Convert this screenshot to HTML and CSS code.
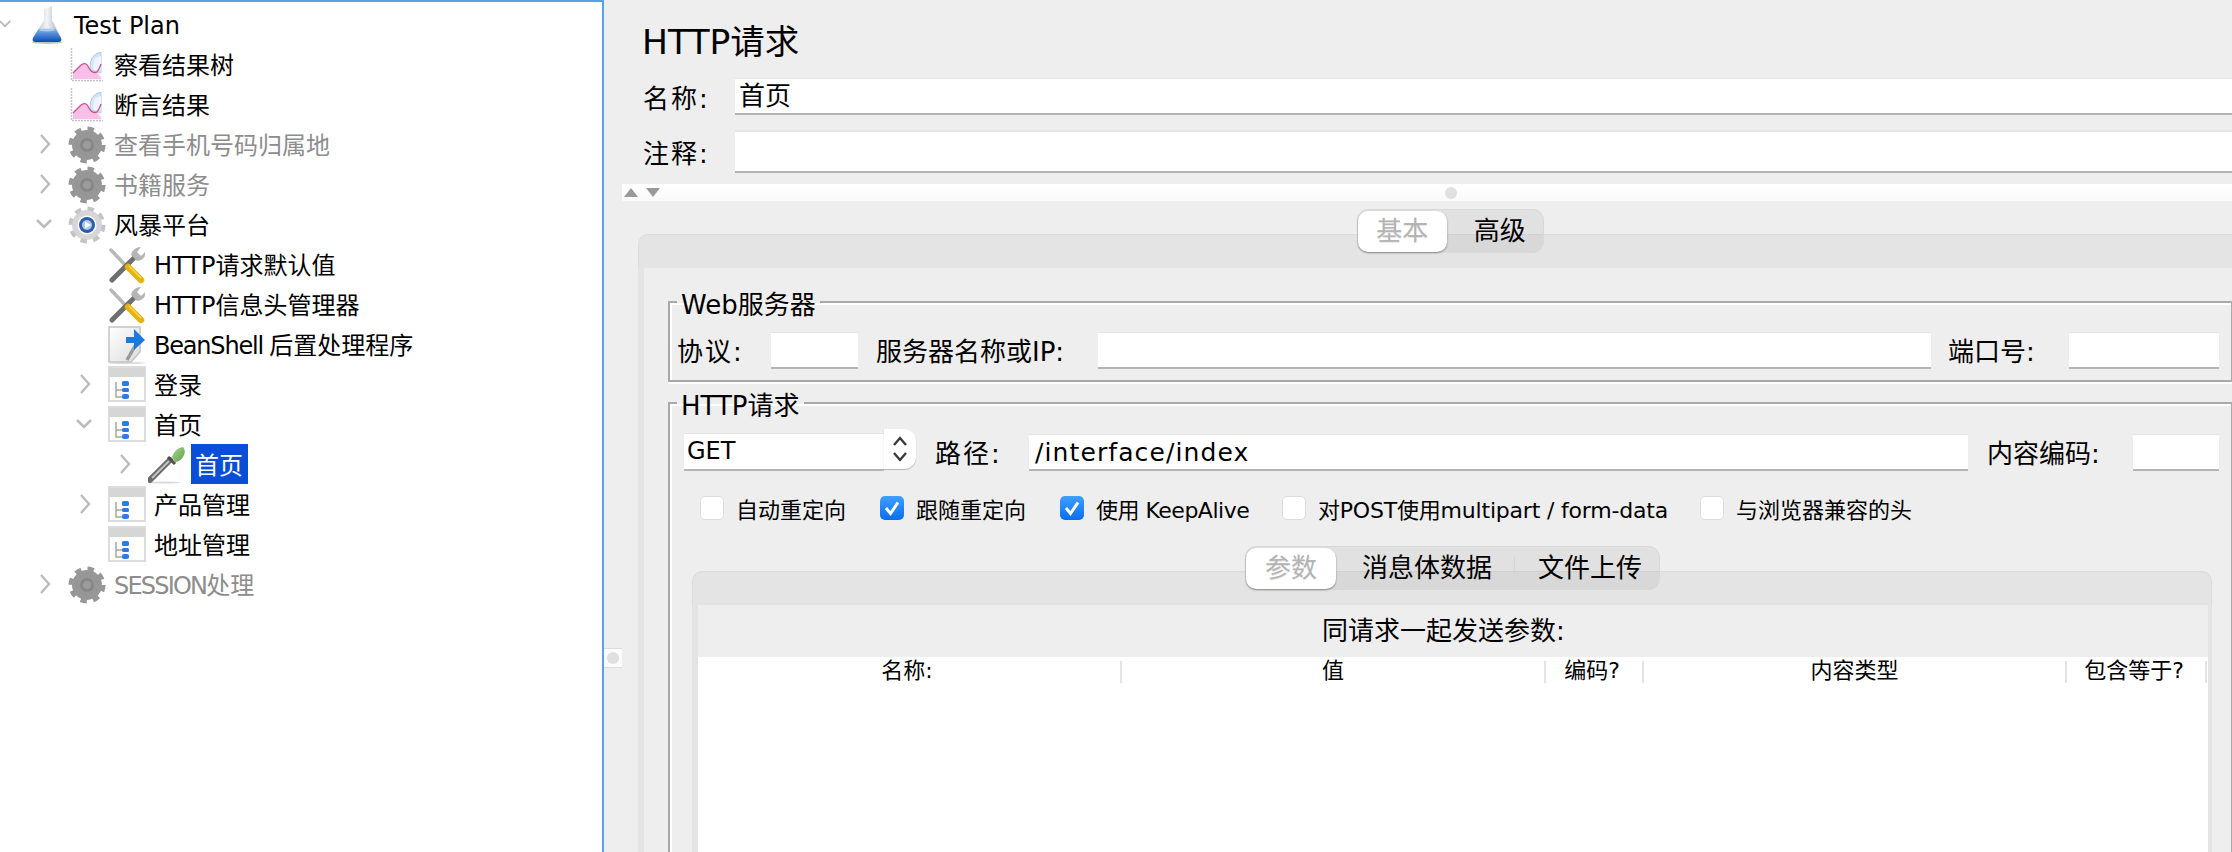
FILE: index.html
```html
<!DOCTYPE html>
<html lang="zh">
<head>
<meta charset="utf-8">
<title>HTTP请求</title>
<link rel="stylesheet" href="styles.css">
</head>
<body>
<svg class="defs" width="0" height="0" aria-hidden="true">
  <defs>
    <linearGradient id="glass" x1="0" y1="0" x2="1" y2="0"><stop offset="0" stop-color="#a9aeb8"/><stop offset=".5" stop-color="#f4f5f8"/><stop offset="1" stop-color="#9aa0ac"/></linearGradient>
    <linearGradient id="liquid" x1="0" y1="0" x2="0" y2="1"><stop offset="0" stop-color="#7fb2ee"/><stop offset="1" stop-color="#0a4bb4"/></linearGradient>
    <linearGradient id="page" x1="0" y1="0" x2="1" y2="1"><stop offset="0" stop-color="#fff"/><stop offset="1" stop-color="#dcdcdc"/></linearGradient>
    <linearGradient id="bulb" x1="0" y1="0" x2="1" y2="1"><stop offset="0" stop-color="#a6d88e"/><stop offset="1" stop-color="#5f9f4c"/></linearGradient>
    <symbol id="i-flask" viewBox="0 0 38 38">
      <ellipse cx="19" cy="36.500" rx="15" ry="1.500" fill="#c4c4c4"/>
      <path d="M16 3 24 0V14L33 32Q34.500 36 30 36H8Q3.500 36 5 32L16 14Z" fill="url(#glass)"/>
      <path d="M10.500 23H27.500L33 32Q34.500 36 30 36H8Q3.500 36 5 32Z" fill="url(#liquid)"/>
      <ellipse cx="19" cy="24" rx="8" ry="1.500" fill="#a9c9f2"/>
    </symbol>
    <symbol id="i-chart" viewBox="0 0 38 38">
      <path d="M3.500 2V34.500H35" fill="none" stroke="#c4c4c4" stroke-width="1.500" stroke-dasharray="2 1"/>
      <path d="M22 24Q21 8 33 6V27Z" fill="#d6e4fa" stroke="#b4caee"/>
      <path d="M27 12Q24 17 26 24H33V10Z" fill="#eef4fd"/>
      <path d="M5 33V27L13 19Q18 15 21 22 24 28 29 26L34 33Z" fill="#f8bfe8"/>
      <path d="M5 27 13 19Q18 15 21 22 24 28 29 26 32 22 33 18" fill="none" stroke="#c2557f" stroke-width="1.300"/>
    </symbol>
    <symbol id="i-gear-off" viewBox="0 0 38 38">
      <circle cx="19" cy="19" r="15" fill="#979797"/>
      <circle cx="19" cy="19" r="16.500" fill="none" stroke="#979797" stroke-width="4" stroke-dasharray="6.500 6.460"/>
      <circle cx="19" cy="19" r="7" fill="#878787"/>
      <circle cx="19" cy="19" r="4" fill="#9c9c9c"/>
    </symbol>
    <symbol id="i-gear-on" viewBox="0 0 38 38">
      <circle cx="19" cy="19" r="15" fill="#d6d6d8"/>
      <circle cx="19" cy="19" r="16.500" fill="none" stroke="#c4c4c6" stroke-width="4" stroke-dasharray="6.500 6.460"/>
      <circle cx="19" cy="19" r="9.500" fill="#fff"/>
      <circle cx="19" cy="19" r="8" fill="#2c5ea8"/>
      <circle cx="19" cy="19" r="5" fill="#a9c8ee"/>
      <path d="M17 15.500 23 19 17 22.500Z" fill="#fff"/>
    </symbol>
    <symbol id="i-tools" viewBox="0 0 38 38">
      <path d="M3 4 19 21" stroke="#b9b9b9" stroke-width="3.500" stroke-linecap="round"/>
      <path d="M4 34 27 11" stroke="#6f6f6f" stroke-width="5" stroke-linecap="round"/>
      <path d="M23 9Q25 1 33 1L29 6 33 10 37 6Q38 14 29 15Z" fill="#b5b5b5"/>
      <path d="M20 21 33 34" stroke="#e8b30f" stroke-width="6.500" stroke-linecap="round"/>
      <path d="M21 20 33 32" stroke="#f7d65a" stroke-width="1.500"/>
    </symbol>
    <symbol id="i-script" viewBox="0 0 38 38">
      <ellipse cx="19" cy="37" rx="18" ry="1" fill="#dcdcdc"/>
      <path d="M1 1H32V26L23 36H1Z" fill="url(#page)" stroke="#c4c4c4" stroke-width="1.500"/>
      <path d="M27 20 19 34" stroke="#9a9a9a" stroke-width="3.500"/>
      <path d="M18 11H26V3L37 14 26 24V17H18Z" fill="#1b78dc"/>
    </symbol>
    <symbol id="i-group" viewBox="0 0 38 38">
      <rect x="1" y="1" width="36" height="34" fill="#fff" stroke="#dcdcdc" stroke-width="2"/>
      <rect x="1" y="2" width="36" height="9" fill="#d6d6d6"/>
      <path d="M8 16V31H14M8 24H14" fill="none" stroke="#a6a6a6" stroke-width="1.500"/>
      <rect x="14" y="15" width="7" height="5" rx="1.500" fill="#2c7de2"/>
      <rect x="14" y="22" width="7" height="4" rx="1.500" fill="#2c7de2"/>
      <rect x="14" y="28" width="7" height="5" rx="2" fill="#2c7de2"/>
    </symbol>
    <symbol id="i-dropper" viewBox="0 0 38 38">
      <ellipse cx="16" cy="36.500" rx="16" ry="1" fill="#dadada"/>
      <path d="M2 34 22 14" stroke="#6c6c6c" stroke-width="6" stroke-linecap="round"/>
      <path d="M4 32 21 15" stroke="#c6c6c6" stroke-width="1.800"/>
      <path d="M20 11 27 18" stroke="#4f4f4f" stroke-width="3"/>
      <path d="M24 11Q27 2 35 1 38 4 36 9 33 16 27 16Z" fill="url(#bulb)"/>
    </symbol>
    <symbol id="c-right" viewBox="0 0 16 22"><path d="M4 2 12 11 4 20" fill="none" stroke="#bcbcbc" stroke-width="2.500"/></symbol>
    <symbol id="c-down" viewBox="0 0 16 16"><path d="M1 4 8 11 15 4" fill="none" stroke="#bcbcbc" stroke-width="2.500"/></symbol>
  </defs>
</svg>

<div class="app">
  <nav class="tree">
    <div class="node l0"><span class="tog"><svg class="chev-down small"><use href="#c-down"/></svg></span><svg class="ico"><use href="#i-flask"/></svg><span class="lbl">Test Plan</span></div>
    <div class="node l1"><span class="tog"></span><svg class="ico"><use href="#i-chart"/></svg><span class="lbl">察看结果树</span></div>
    <div class="node l1"><span class="tog"></span><svg class="ico"><use href="#i-chart"/></svg><span class="lbl">断言结果</span></div>
    <div class="node l1 off"><span class="tog"><svg class="chev-right"><use href="#c-right"/></svg></span><svg class="ico"><use href="#i-gear-off"/></svg><span class="lbl">查看手机号码归属地</span></div>
    <div class="node l1 off"><span class="tog"><svg class="chev-right"><use href="#c-right"/></svg></span><svg class="ico"><use href="#i-gear-off"/></svg><span class="lbl">书籍服务</span></div>
    <div class="node l1"><span class="tog"><svg class="chev-down"><use href="#c-down"/></svg></span><svg class="ico"><use href="#i-gear-on"/></svg><span class="lbl">风暴平台</span></div>
    <div class="node l2"><span class="tog"></span><svg class="ico"><use href="#i-tools"/></svg><span class="lbl">HTTP请求默认值</span></div>
    <div class="node l2"><span class="tog"></span><svg class="ico"><use href="#i-tools"/></svg><span class="lbl">HTTP信息头管理器</span></div>
    <div class="node l2"><span class="tog"></span><svg class="ico"><use href="#i-script"/></svg><span class="lbl"><span class="tight">BeanShell </span>后置处理程序</span></div>
    <div class="node l2"><span class="tog"><svg class="chev-right"><use href="#c-right"/></svg></span><svg class="ico"><use href="#i-group"/></svg><span class="lbl">登录</span></div>
    <div class="node l2"><span class="tog"><svg class="chev-down"><use href="#c-down"/></svg></span><svg class="ico"><use href="#i-group"/></svg><span class="lbl">首页</span></div>
    <div class="node l3"><span class="tog"><svg class="chev-right"><use href="#c-right"/></svg></span><svg class="ico"><use href="#i-dropper"/></svg><span class="lbl selected">首页</span></div>
    <div class="node l2"><span class="tog"><svg class="chev-right"><use href="#c-right"/></svg></span><svg class="ico"><use href="#i-group"/></svg><span class="lbl">产品管理</span></div>
    <div class="node l2"><span class="tog"></span><svg class="ico"><use href="#i-group"/></svg><span class="lbl">地址管理</span></div>
    <div class="node l1 off"><span class="tog"><svg class="chev-right"><use href="#c-right"/></svg></span><svg class="ico"><use href="#i-gear-off"/></svg><span class="lbl"><span class="tighter">SESSION</span>处理</span></div>
  </nav>

  <main class="editor">
    <div class="v-handle"><span class="dot"></span></div>

    <h1 class="title">HTTP请求</h1>
    <div class="meta-row name-row"><label class="meta-label">名称:</label><div class="field grow">首页</div></div>
    <div class="meta-row note-row"><label class="meta-label">注释:</label><div class="field grow tall"></div></div>
    <div class="splitter"><span class="tri up"></span><span class="tri down"></span><span class="dot"></span></div>

    <div class="seg seg-main">
      <span class="seg-item on s-basic">基本</span>
      <span class="seg-item s-adv">高级</span>
    </div>
    <section class="pane pane-main">
      <div class="band"></div>
      <div class="pane-body">
        <fieldset class="group">
          <legend>Web服务器</legend>
          <div class="row server-row">
            <span class="lab l-proto">协议:</span><div class="field f-proto"></div>
            <span class="lab l-host">服务器名称或IP:</span><div class="field grow"></div>
            <span class="lab l-port">端口号:</span><div class="field f-port"></div>
          </div>
        </fieldset>
        <fieldset class="group group-http">
          <legend>HTTP请求</legend>
          <div class="row path-row">
            <div class="combo"><div class="field combo-val">GET</div><div class="combo-btn"><svg width="16" height="28" viewBox="0 0 16 28"><path d="M2 10 8 3 14 10M2 18 8 25 14 18" fill="none" stroke="#3a3a3a" stroke-width="2.400"/></svg></div></div>
            <span class="lab l-path">路径:</span><div class="field grow path-val">/interface/index</div>
            <span class="lab l-enc">内容编码:</span><div class="field f-enc"></div>
          </div>
          <div class="checks">
            <span class="check c1"><i class="box"></i>自动重定向</span>
            <span class="check c2"><i class="box on"><svg width="24" height="24" viewBox="0 0 24 24"><path d="M6 12 10.500 17.500 18 6.500" fill="none" stroke="#fff" stroke-width="3"/></svg></i>跟随重定向</span>
            <span class="check c3"><i class="box on"><svg width="24" height="24" viewBox="0 0 24 24"><path d="M6 12 10.500 17.500 18 6.500" fill="none" stroke="#fff" stroke-width="3"/></svg></i>使用 KeepAlive</span>
            <span class="check c4"><i class="box"></i>对POST使用multipart / form-data</span>
            <span class="check c5"><i class="box"></i>与浏览器兼容的头</span>
          </div>
          <div class="seg seg-sub">
            <span class="seg-item on s-param">参数</span>
            <span class="seg-item s-body">消息体数据</span>
            <span class="seg-sep"></span>
            <span class="seg-item s-file">文件上传</span>
          </div>
          <section class="pane pane-sub">
            <div class="band band-sub"></div>
            <div class="sub-body">
              <div class="params-title">同请求一起发送参数:</div>
              <div class="table">
                <div class="thead">
                  <span class="th">名称:</span>
                  <span class="th th-center">值</span>
                  <span class="th">编码?</span>
                  <span class="th th-center">内容类型</span>
                  <span class="th">包含等于?</span>
                </div>
              </div>
            </div>
          </section>
        </fieldset>
      </div>
    </section>
  </main>
</div>
</body>
</html>
```

FILE: styles.css
```css
* { box-sizing: border-box; }
html, body { margin: 0; height: 100%; }
body {
  width: 2232px;
  height: 852px;
  overflow: hidden;
  background: #eee;
  color: #000;
  font-family: "DejaVu Sans", "Noto Sans CJK SC", sans-serif;
  font-size: 26px;
}
.defs { position: absolute; }
.app { display: flex; height: 852px; }

/* tree */
.tree {
  flex: 0 0 604px;
  background: #fff;
  border-top: 2px solid #5aa2e4;
  border-right: 2px solid #5aa2e4;
  padding-top: 2px;
  font-size: 24px;
}
.node { display: flex; align-items: center; height: 40px; white-space: nowrap; }
.l1 { padding-left: 40px; }
.l2 { padding-left: 80px; }
.l3 { padding-left: 120px; }
.tog { flex: 0 0 28px; display: flex; align-items: center; }
.chev-right { width: 16px; height: 22px; margin-left: -3px; }
.chev-down { width: 16px; height: 16px; margin-left: -4px; }
.chev-down.small { width: 12px; height: 12px; margin-left: -1px; }
.ico { flex: 0 0 38px; width: 38px; height: 38px; margin-top: 2px; }
.lbl { margin-left: 8px; height: 40px; line-height: 44px; }
.off .lbl { color: #8d8d8d; }
.tight { letter-spacing: -1.2px; }
.tighter { letter-spacing: -1.8px; }
.selected {
  margin-left: 5px;
  padding: 0 5px 0 4px;
  background: #0a4ed8;
  color: #fff;
}

/* editor */
.editor { position: relative; flex: 1; min-width: 0; overflow: hidden; background: #eee; }
.v-handle {
  position: absolute;
  left: 0;
  top: 648px;
  width: 18px;
  height: 20px;
  display: flex;
  align-items: center;
  justify-content: center;
  background: #fbfbfb;
  border-top: 1px solid #dcdcdc;
  border-bottom: 1px solid #dcdcdc;
}
.dot { width: 12px; height: 12px; border-radius: 50%; background: #e0e0e0; }
.title {
  margin: 0;
  padding-left: 38px;
  height: 78px;
  font-size: 34.500px;
  font-weight: 400;
  line-height: 84px;
}
.meta-row { display: flex; align-items: center; padding-left: 39px; }
.meta-label { flex: 0 0 92px; letter-spacing: 2px; }
.note-row { margin-top: 15px; }
.field {
  height: 37px;
  background: #fff;
  border-top: 1px solid #e4e4e4;
  border-bottom: 2px solid #b4b4b4;
  padding-left: 4px;
  line-height: 35px;
}
.grow { flex: 1; min-width: 0; }
.tall { height: 43px; border-top-width: 2px; }
.splitter {
  display: flex;
  align-items: center;
  height: 17px;
  margin: 11px 0 0 18px;
  padding-left: 2px;
  background: linear-gradient(#fff, #f9f9f9);
}
.splitter .dot { margin-left: 785px; }
.tri { width: 0; height: 0; border-left: 7px solid transparent; border-right: 7px solid transparent; }
.tri.up { border-bottom: 9px solid #999; }
.tri.down { border-top: 9px solid #999; margin-left: 8px; }

/* segmented tabs */
.seg {
  position: relative;
  z-index: 1;
  display: flex;
  align-items: center;
  background: rgba(0, 0, 0, .05);
  border: 1px solid #d8d8d8;
  border-radius: 11px;
}
.seg-main { width: 187px; height: 44px; margin: 8px 0 0 753px; }
.seg-item { text-align: center; line-height: 40px; }
.seg-item.on {
  height: 41px;
  background: #fff;
  border-radius: 10px;
  box-shadow: 0 1px 2px rgba(0, 0, 0, .4);
  color: #b4b4b4;
  text-shadow: 0 1px 0 #e8e8e8;
}
.s-basic { width: 89px; }
.s-adv { width: 97px; padding-left: 10px; }

/* panes */
.pane-main { margin: -19px 0 0 34px; }
.band {
  height: 34px;
  background: #e4e4e4;
  border-top: 1px solid #dcdcdc;
  border-left: 1px solid #dcdcdc;
  border-top-left-radius: 10px;
}
.pane-body {
  border-left: 6px solid #e4e4e4;
  padding: 16px 0 0 24px;
  background: #eee;
}
.group {
  margin: 0;
  min-width: 0;
  padding: 12px 12px 11px 6px;
  border: solid #a9a9a9;
  border-width: 2px 1px 2px 2px;
  box-shadow: inset 2px 2px 0 #fff, 0 2px 0 #fff;
}
.group legend {
  margin-left: 1px;
  padding: 6px 4px 0 4px;
  line-height: 30px;
}
.group-http { margin-top: 3px; padding: 12px 12px 0 14px; }
.group-http legend { margin-left: -7px; }
.row { display: flex; align-items: center; }
.server-row { height: 37px; }
.lab { flex: none; padding-bottom: 2px; white-space: nowrap; }
.l-proto { flex-basis: 95px; padding-left: 1px; letter-spacing: 2px; }
.f-proto { flex: 0 0 87px; }
.l-host { flex-basis: 222px; margin-left: 18px; }
.l-port { flex-basis: 121px; margin-left: 17px; }
.f-port { flex: 0 0 150px; }

.path-row { height: 38px; }
.combo { display: flex; align-items: center; flex: 0 0 232px; }
.combo-val { flex: 1; height: 38px; padding-left: 3px; font-size: 24px; }
.combo-btn {
  flex: 0 0 32px;
  height: 40px;
  margin-top: -6px;
  display: flex;
  align-items: center;
  justify-content: center;
  background: #fff;
  border-radius: 0 12px 12px 0;
  box-shadow: 0 1px 1px rgba(0, 0, 0, .25);
}
.l-path { flex-basis: 94px; margin-left: 19px; letter-spacing: 2px; }
.path-val { padding-left: 6px; font-size: 25px; letter-spacing: 1.100px; }
.l-enc { flex-basis: 146px; margin-left: 19px; }
.f-enc { flex: 0 0 86px; }

.checks { display: flex; align-items: center; height: 24px; margin-top: 25px; padding-left: 16px; font-size: 22px; white-space: nowrap; }
.check { display: flex; align-items: center; flex: none; }
.box {
  width: 24px;
  height: 24px;
  margin-right: 12px;
  display: block;
  background: #fff;
  border: 1px solid #dcdcdc;
  border-radius: 5px;
}
.box.on { background: linear-gradient(#3fa0ff, #0a6df0); border: 0; }
.box svg { display: block; }
.c1 { flex-basis: 180px; }
.c2 { flex-basis: 180px; }
.c3 { flex-basis: 222px; letter-spacing: -.5px; }
.c4 { flex-basis: 418px; letter-spacing: -.2px; }

.seg-sub { width: 415px; height: 44px; margin: 26px 0 0 561px; }
.s-param { width: 90px; }
.s-body { margin-left: 26px; width: 130px; }
.seg-sep { width: 1px; height: 22px; margin: 0 23px 0 22px; background: #d4d4d4; }
.s-file { width: 104px; }

.pane-sub { margin: -19px 7px 0 8px; }
.band-sub { border-top-right-radius: 10px; border-right: 1px solid #dcdcdc; }
.sub-body { border: solid #e4e4e4; border-width: 0 4px 0 6px; background: #eee; }
.params-title { height: 52px; padding-left: 624px; line-height: 52px; }
.table { height: 400px; background: #fff; }
.thead { display: grid; grid-template-columns: 424px 424px 98px 423px 140px; padding-top: 4px; font-size: 22px; }
.th { height: 22px; padding-right: 4px; border-right: 2px solid #e4e4e4; text-align: center; line-height: 19px; white-space: nowrap; }
.th-center { padding-right: 0; }
```
